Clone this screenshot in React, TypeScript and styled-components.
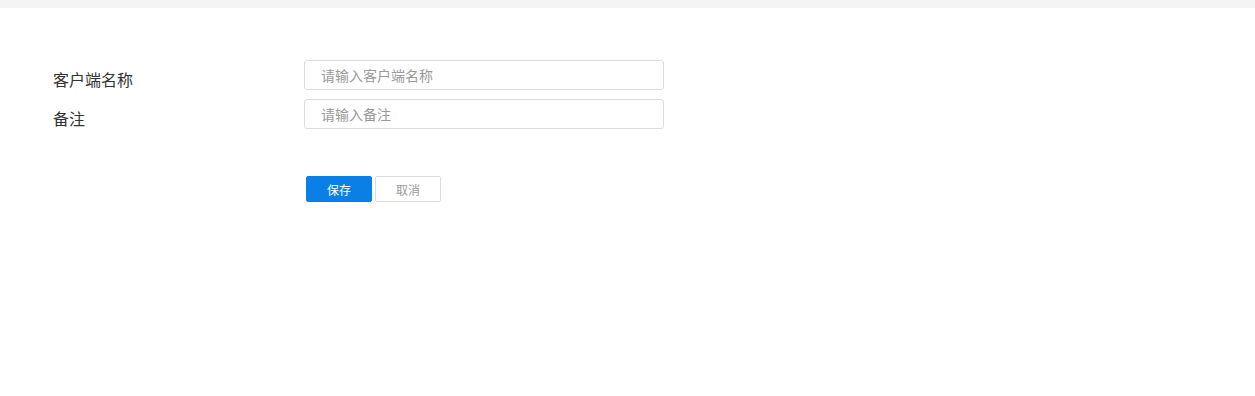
import React from "react";
import styled, { createGlobalStyle } from "styled-components";

const Global = createGlobalStyle`
  html, body { margin: 0; padding: 0; background: #fff; }
  body { font-family: "Noto Sans CJK SC", "Noto Sans", sans-serif; }
  * { box-sizing: border-box; }
`;

const TopBar = styled.div`
  height: 8px;
  background: #f4f4f4;
`;

const Form = styled.form`
  display: flex;
  flex-direction: column;
  gap: 9px;
  padding: 52px 0 0 53px;
`;

const Row = styled.div`
  display: flex;
  align-items: flex-start;
  height: 30px;
`;

const Label = styled.label`
  width: 251px;
  padding-top: 8px;
  font-size: 16px;
  line-height: 22px;
  color: #333;
`;

const Input = styled.input`
  width: 360px;
  height: 30px;
  padding: 0 16px;
  border: 1px solid #dcdcdc;
  border-radius: 3px;
  font-family: inherit;
  font-size: 14px;
  color: #333;
  outline: none;
  &::placeholder { color: #999; }
`;

const Actions = styled.div`
  display: flex;
  gap: 3px;
  margin: 38px 0 0 253px;
`;

const Button = styled.button<{ $primary?: boolean }>`
  width: 66px;
  height: 26px;
  padding: 0;
  border-radius: 2px;
  font-family: inherit;
  font-size: 12px;
  cursor: pointer;
  border: 1px solid ${(p) => (p.$primary ? "#0a80e6" : "#dcdcdc")};
  background: ${(p) => (p.$primary ? "#0a80e6" : "#fff")};
  color: ${(p) => (p.$primary ? "#fff" : "#999")};
`;

export default function App() {
  return (
    <>
      <Global />
      <TopBar />
      <Form onSubmit={(e) => e.preventDefault()}>
        <Row>
          <Label>客户端名称</Label>
          <Input placeholder="请输入客户端名称" />
        </Row>
        <Row>
          <Label>备注</Label>
          <Input placeholder="请输入备注" />
        </Row>
        <Actions>
          <Button type="submit" $primary>保存</Button>
          <Button type="button">取消</Button>
        </Actions>
      </Form>
    </>
  );
}
